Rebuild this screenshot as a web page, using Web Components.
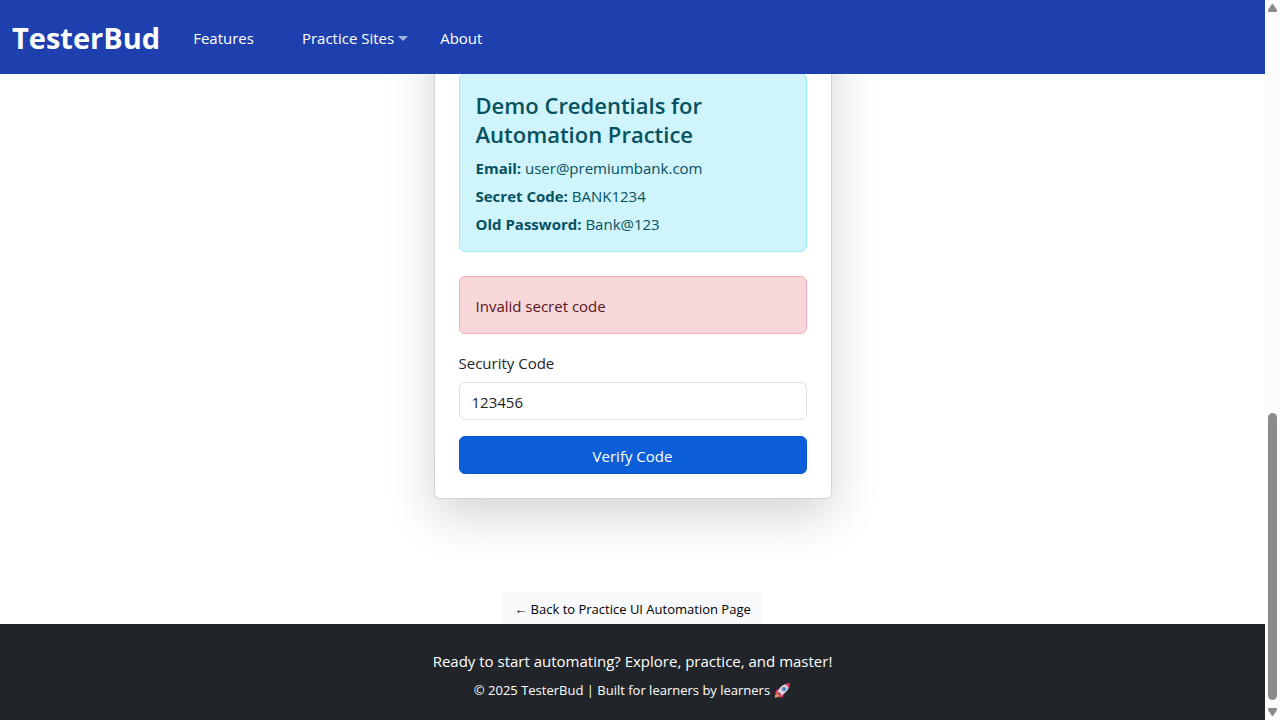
<!DOCTYPE html>
<html lang="en">
<head>
<meta charset="utf-8">
<meta name="viewport" content="width=device-width, initial-scale=1">
<title>TesterBud</title>
<style>
  html, body { height: 100%; margin: 0; }
  body { font: 15px/24px "Segoe UI", "Open Sans", "Noto Sans", sans-serif; color: #212529; background: #fff; }
</style>
</head>
<body>
<tb-app></tb-app>

<template id="tb-app">
  <style>
    :host { display: flex; height: 100vh; overflow: hidden; }
    .page { flex: 1; min-width: 0; display: flex; flex-direction: column; }
    main { flex: 1; min-height: 0; overflow: hidden; display: flex; flex-direction: column; align-items: center; justify-content: flex-end; gap: 94px; }
  </style>
  <div class="page">
    <tb-navbar></tb-navbar>
    <main>
      <tb-card>
        <tb-alert variant="info">
          <tb-credentials></tb-credentials>
        </tb-alert>
        <tb-alert variant="danger">Invalid secret code</tb-alert>
        <tb-code-form></tb-code-form>
      </tb-card>
      <tb-back-link>← Back to Practice UI Automation Page</tb-back-link>
    </main>
    <tb-footer></tb-footer>
  </div>
  <tb-scrollbar></tb-scrollbar>
</template>

<template id="tb-navbar">
  <style>
    :host { display: block; flex: none; background: #1e40af; color: #fff; }
    nav { display: flex; align-items: center; padding: 14px 12px 12px; }
    a { color: inherit; text-decoration: none; }
    .brand { font-size: 29px; line-height: 48px; font-weight: 700; margin-right: 17px; }
    ul { display: flex; list-style: none; margin: 0; padding: 0; gap: 16px; }
    li a { display: flex; align-items: center; gap: 4px; padding: 4px 16px; }
    li.menu a { padding-right: 0; }
    .caret { border: 5px solid transparent; border-top-color: #a5b3df; border-bottom: 0; }
  </style>
  <nav>
    <a class="brand" href="#">TesterBud</a>
    <ul>
      <li><a href="#features">Features</a></li>
      <li class="menu"><a href="#sites">Practice Sites<span class="caret"></span></a></li>
      <li><a href="#about">About</a></li>
    </ul>
  </nav>
</template>

<template id="tb-card">
  <style>
    :host { display: flex; flex-direction: column; flex: none; box-sizing: border-box; width: 100%; max-width: 398px; padding: 96px 24px 24px; border: 1px solid #d3d4d5; border-radius: 6px; background: #fff; box-shadow: 0 16px 48px rgba(0, 0, 0, .175); }
    ::slotted(tb-alert[variant="info"]) { margin-bottom: 24px; }
    ::slotted(tb-alert[variant="danger"]) { margin-bottom: 17px; }
  </style>
  <slot></slot>
</template>

<template id="tb-alert">
  <style>
    :host { display: block; padding: 17px 16px 15px; border: 1px solid; border-radius: 6px; }
    :host([variant="info"]) { color: #055160; background: #cff4fc; border-color: #9eeaf9; }
    :host([variant="danger"]) { color: #58151c; background: #f8d7da; border-color: #f1aeb5; }
  </style>
  <slot></slot>
</template>

<template id="tb-credentials">
  <style>
    :host { display: block; }
    h4 { margin: 0 0 7px; font-size: 22px; line-height: 29px; font-weight: 600; }
    p { margin: 0 0 4px; }
    p:last-child { margin: 0; }
    strong { font-weight: 700; }
  </style>
  <h4>Demo Credentials for Automation Practice</h4>
  <p><strong>Email:</strong> user@premiumbank.com</p>
  <p><strong>Secret Code:</strong> BANK1234</p>
  <p><strong>Old Password:</strong> Bank@123</p>
</template>

<template id="tb-code-form">
  <style>
    :host { display: block; }
    form { display: flex; flex-direction: column; }
    label { margin-bottom: 7px; }
    input, button { font: inherit; box-sizing: border-box; height: 38px; width: 100%; padding: 7px 12px 5px; border-radius: 6px; }
    input { margin: 0 0 16px; color: #212529; background: #fff; border: 1px solid #dee2e6; outline: 0; }
    button { margin: 0; color: #fff; background: #0b5ed7; border: 1px solid #0a58ca; }
  </style>
  <form>
    <label for="code">Security Code</label>
    <input id="code" type="text" value="123456">
    <button type="button">Verify Code</button>
  </form>
</template>

<template id="tb-back-link">
  <style>
    :host { display: block; flex: none; }
    a { display: block; padding: 6px 12px 4px; border-radius: 4px; background: #f8f9fa; color: #000; font-size: 13px; line-height: 21px; text-decoration: none; }
  </style>
  <a href="#practice"><slot></slot></a>
</template>

<template id="tb-footer">
  <style>
    :host { display: block; flex: none; background: #212529; color: #fff; text-align: center; }
    footer { padding: 25px 12px 19px; }
    p { margin: 0 0 7px; }
    small { display: flex; justify-content: center; align-items: center; gap: 4px; font-size: 13px; line-height: 21px; }
    svg { width: 17px; height: 17px; }
  </style>
  <footer>
    <p>Ready to start automating? Explore, practice, and master!</p>
    <small>© 2025 TesterBud | Built for learners by learners
      <svg viewBox="0 0 17 17" role="img" aria-label="rocket">
        <path d="M5 7L2 8 1 12l4-2zM10 12l-1 3-4 1 2-4z" fill="#e0305e"/>
        <path d="M3 11l-2 2v3l3-1 2-1z" fill="#f7894a"/>
        <path d="M3 11Q6 3 12 2l3 3Q13 11 6 14z" fill="#dcd5e2"/>
        <path d="M11 2q3-1 5-1 0 3-1 5z" fill="#e0305e"/>
        <path d="M3 11l3 3 1-2-2-2z" fill="#b72f57"/>
        <circle cx="10" cy="7" r="2" fill="#3682d8" stroke="#8b93ad"/>
      </svg>
    </small>
  </footer>
</template>

<template id="tb-scrollbar">
  <style>
    :host { flex: none; box-sizing: border-box; width: 15px; padding: 4px 3px; display: flex; flex-direction: column; align-items: center; background: #fcfcfc; }
    svg { flex: none; width: 9px; height: 8px; fill: #8b8b8b; }
    .track { flex: 1; align-self: stretch; display: flex; flex-direction: column; justify-content: flex-end; padding: 4px 0 8px; }
    .thumb { height: 42%; border-radius: 5px; background: #8b8b8b; }
  </style>
  <svg viewBox="0 0 9 8" aria-hidden="true"><path d="M4 0h1l4 6v1q0 1-1 1H1Q0 8 0 7V6z"/></svg>
  <div class="track"><div class="thumb"></div></div>
  <svg viewBox="0 0 9 8" aria-hidden="true"><path d="M4 8h1l4-6V1q0-1-1-1H1Q0 0 0 1v1z"/></svg>
</template>

<script>
  class TemplateElement extends HTMLElement {
    constructor() {
      super();
      const template = document.getElementById(this.localName);
      this.attachShadow({ mode: "open" }).append(template.content.cloneNode(true));
    }
  }
  for (const name of ["tb-navbar", "tb-alert", "tb-credentials", "tb-code-form", "tb-card", "tb-back-link", "tb-footer", "tb-scrollbar", "tb-app"]) {
    customElements.define(name, class extends TemplateElement {});
  }
</script>
</body>
</html>
